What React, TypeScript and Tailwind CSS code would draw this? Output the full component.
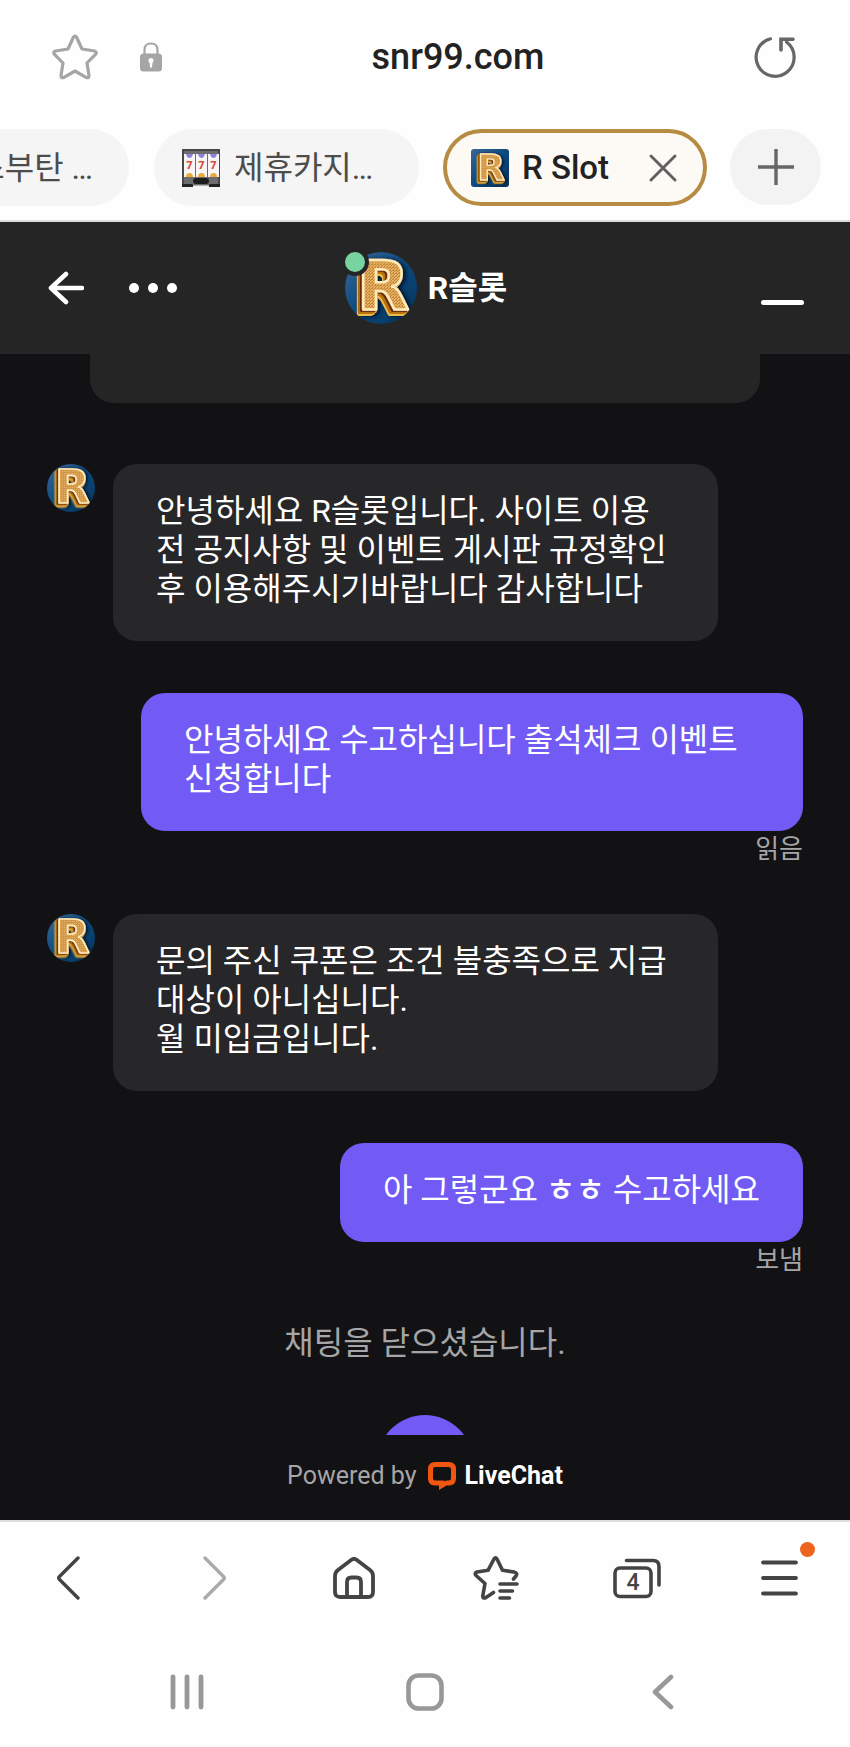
import type { ReactNode } from 'react';

function Logo({ className }: { className: string }) {
  return (
    <svg viewBox="0 0 72 72" className={className} aria-hidden="true">
      <defs>
        <linearGradient id="logo-bg" x1="0" y1="0" x2="1" y2="1">
          <stop offset="0" stopColor="#3a6796" />
          <stop offset="0.5" stopColor="#0b4a7f" />
          <stop offset="1" stopColor="#063257" />
        </linearGradient>
        <linearGradient id="logo-face" x1="0" y1="0" x2="0" y2="1">
          <stop offset="0" stopColor="#f3c274" />
          <stop offset="0.5" stopColor="#d18f35" />
          <stop offset="1" stopColor="#efb95c" />
        </linearGradient>
        <pattern id="logo-mesh" width="3" height="3" patternUnits="userSpaceOnUse">
          <rect width="3" height="3" fill="#e6b163" />
          <path d="M0 3 3 0M0 0l1.500 1.500" stroke="#bd7f31" strokeWidth="0.800" />
        </pattern>
        <filter id="logo-depth" x="-30%" y="-30%" width="160%" height="160%">
          <feDropShadow dx="0" dy="0" stdDeviation="0.400" floodColor="#7a3d0c" />
          <feDropShadow dx="-2" dy="1" stdDeviation="0" floodColor="#6a2c08" />
          <feDropShadow dx="-2" dy="2" stdDeviation="0" floodColor="#b8720f" />
          <feDropShadow dx="-1" dy="2" stdDeviation="0" floodColor="#efbd4b" />
          <feDropShadow dx="3" dy="1" stdDeviation="2" floodColor="#03192e" />
        </filter>
      </defs>
      <rect width="72" height="72" fill="url(#logo-bg)" />
      <text
        x="12"
        y="58"
        filter="url(#logo-depth)"
        fontFamily="DejaVu Sans, sans-serif"
        fontWeight="700"
        fontSize="68"
        fill="url(#logo-mesh)"
        stroke="#ffeab8"
        strokeWidth="2.600"
        strokeLinejoin="round"
      >
        R
      </text>
    </svg>
  );
}

function SlotMachine() {
  return (
    <svg viewBox="0 0 38 38" className="size-[38px] shrink-0" aria-hidden="true">
      <rect width="38" height="38" rx="1" fill="#6d6d6f" />
      <path d="M1 38V1h36v37" fill="none" stroke="#3c3c3e" strokeWidth="1.5" />
      {[2, 14, 26].map((x) => (
        <g key={x}>
          <rect x={x} y="5" width="11" height="23" fill="#f7f5f5" />
          <path d={`M${x + 2} 5h7q-1 4-3.500 4T${x + 2} 5`} fill="#8f83da" />
          <path d={`M${x + 2} 28q0-4 3.500-4t3.500 4z`} fill="#eda93c" />
          <text x={x + 5.5} y="20" textAnchor="middle" fontFamily="Roboto, sans-serif" fontSize="11" fontWeight="900" fill="#df4d3c">7</text>
        </g>
      ))}
      <rect x="11" y="29" width="16" height="6" rx="3" fill="#1d1d1e" />
      <path d="M0 35h10l2 2h14l2-2h10v3H0z" fill="#232324" />
      <path d="M11 36.500h16V38H11z" fill="#f5f5f5" />
    </svg>
  );
}

function Icon({ label, className, viewBox, children }: { label: string; className: string; viewBox: string; children: ReactNode }) {
  return (
    <button type="button" aria-label={label} className="flex shrink-0 items-center justify-center">
      <svg viewBox={viewBox} className={className} fill="none" stroke="currentColor" strokeLinecap="round" strokeLinejoin="round">
        {children}
      </svg>
    </button>
  );
}

function AgentMessage({ children }: { children: ReactNode }) {
  return (
    <div className="mr-[132px] ml-[47px] flex items-start gap-[18px]">
      <Logo className="size-12 shrink-0 rounded-full" />
      <p className="flex-1 rounded-3xl bg-[#272628] px-[43px] pt-7 pb-8 text-[32px] leading-[39px] break-keep">{children}</p>
    </div>
  );
}

function VisitorMessage({ status, children }: { status: string; children: ReactNode }) {
  return (
    <div className="mr-[47px] ml-[141px] flex flex-col items-end">
      <p className="rounded-3xl bg-[#715bf4] px-[43px] pt-7 pb-8 text-[32px] leading-[39px] break-keep">{children}</p>
      <span className="text-[26px] leading-9 text-[#a6a5a7]">{status}</span>
    </div>
  );
}

export default function App() {
  return (
    <div className="flex min-h-screen flex-col bg-[#fefefe] font-[Roboto,'Noto_Sans_CJK_KR',sans-serif]">
      <header className="border-b-2 border-[#dcdcde]">
        <div className="flex h-[113px] items-center pr-[54px] pl-[52px]">
          <Icon label="북마크 추가" className="size-[46px] text-[#a5a5a5]" viewBox="0 0 46 46">
            <path strokeWidth="3.200" d="M21.300 3.500Q23 .9 24.700 3.500L30 15l12.500 2q3 1 1 3.400L35 29l2 12.500q0 3.200-3 1.800L23 37l-11 6.300q-3 1.400-3-1.800L11 29 2.500 20.400q-2-2.400 1-3.400L16 15z" />
          </Icon>
          <svg viewBox="0 0 22 30" className="ml-[42px] h-[30px] w-[22px] text-[#a5a5a5]" aria-hidden="true">
            <path d="M4.500 13V8q0-6.500 6.500-6.500T17.500 8v5" fill="none" stroke="currentColor" strokeWidth="2.200" />
            <rect y="11.500" width="22" height="18" rx="3.500" fill="currentColor" />
            <path d="M11 16a2.600 2.600 0 0 1 1.400 4.800l-.4 4.700h-2l-.4-4.700A2.600 2.600 0 0 1 11 16z" fill="#fff" />
          </svg>
          <div className="flex-1 text-center text-[36px] leading-10 font-medium text-[#222]">snr99.com</div>
          <Icon label="새로고침" className="size-[42px] text-[#666]" viewBox="0 0 42 42">
            <path strokeWidth="3.200" d="M16.500 2.800A19 19 0 1 0 32.500 6" />
            <path strokeWidth="3.600" strokeLinejoin="miter" d="M39 3.200H27V14" />
          </Icon>
        </div>
        <nav aria-label="탭" className="flex justify-end overflow-hidden pt-4 pr-[29px] pb-[14px] text-[32px] leading-10 text-[#4c4c4c]">
          <button type="button" className="mr-[25px] flex h-[77px] w-[265px] shrink-0 items-center justify-end rounded-full bg-[#f5f5f5] pr-9 whitespace-nowrap">스부탄 …</button>
          <button type="button" className="mr-6 flex h-[77px] w-[265px] shrink-0 items-center gap-[14px] rounded-full bg-[#f5f5f5] pl-7 whitespace-nowrap">
            <SlotMachine />
            제휴카지…
          </button>
          <div className="mr-[23px] flex h-[77px] w-[264px] shrink-0 items-center rounded-full border-4 border-[#b68b42] bg-[#fdfaf6] pr-[26px] pl-6 text-[33px] font-medium text-[#222]">
            <button type="button" className="flex flex-1 items-center gap-[13px]">
              <Logo className="size-[38px] rounded-[3px]" />
              R Slot
            </button>
            <Icon label="탭 닫기" className="size-[28px] text-[#606060]" viewBox="0 0 28 28">
              <path strokeWidth="2.900" d="m2 2 24 24M26 2 2 26" />
            </Icon>
          </div>
          <button type="button" aria-label="새 탭" className="flex h-[76px] w-[91px] shrink-0 items-center justify-center rounded-full bg-[#f4f3f4]">
            <svg viewBox="0 0 38 38" className="size-[38px] text-[#666]" fill="none" stroke="currentColor" strokeWidth="3.400" aria-hidden="true">
              <path d="M1 19h36M19 1v36" />
            </svg>
          </button>
        </nav>
      </header>

      <main className="flex flex-col bg-[#121113] text-white">
        <div className="flex h-[132px] items-center bg-[#252526] px-[46px]">
          <div className="flex flex-1 items-center gap-[45px] pl-0.5">
            <Icon label="뒤로" className="h-[34px] w-9" viewBox="0 0 36 34">
              <path strokeWidth="4.600" d="M18 3 3 17l15 14M3 17h31" />
            </Icon>
            <Icon label="더보기" className="h-3 w-12" viewBox="0 0 48 12">
              <g fill="currentColor" stroke="none"><circle cx="5" cy="6" r="5" /><circle cx="24" cy="6" r="5" /><circle cx="43" cy="6" r="5" /></g>
            </Icon>
          </div>
          <div className="flex items-center gap-[11px]">
            <div className="relative">
              <Logo className="size-[72px] rounded-full" />
              <span className="absolute -top-1 -left-1 size-7 rounded-full border-4 border-[#252526] bg-[#77d4a1]" />
            </div>
            <h1 className="text-[32px] leading-10 font-bold">R슬롯</h1>
          </div>
          <div className="flex flex-1 justify-end">
            <button type="button" aria-label="최소화" className="flex h-[34px] w-[43px] items-end">
              <span className="h-[5px] w-full rounded-full bg-white" />
            </button>
          </div>
        </div>

        <div className="flex h-[1081px] flex-col overflow-hidden">
          <div className="mx-[90px] mb-[61px] h-[49px] shrink-0 rounded-b-3xl bg-[#252526]" />
          <AgentMessage>안녕하세요 R슬롯입니다. 사이트 이용 전 공지사항 및 이벤트 게시판 규정확인 후 이용해주시기바랍니다 감사합니다</AgentMessage>
          <div className="h-[52px] shrink-0" />
          <VisitorMessage status="읽음">안녕하세요 수고하십니다 출석체크 이벤트 신청합니다</VisitorMessage>
          <div className="h-[47px] shrink-0" />
          <AgentMessage>
            문의 주신 쿠폰은 조건 불충족으로 지급 대상이 아니십니다.
            <br />
            월 미입금입니다.
          </AgentMessage>
          <div className="h-[52px] shrink-0" />
          <VisitorMessage status="보냄">아 그렇군요 <span className="font-medium">ㅎㅎ</span> 수고하세요</VisitorMessage>
          <p className="mt-[45px] text-center text-[32px] leading-10 text-[#a6a5a7]">채팅을 닫으셨습니다.</p>
          <button type="button" aria-label="채팅 다시 시작" className="mx-auto mt-[52px] size-24 shrink-0 rounded-full bg-[#715bf4]" />
        </div>

        <footer className="flex h-[85px] items-center justify-center pb-1 text-[25px]">
          <span className="text-[#a6a5a7]">Powered by</span>
          <a href="#livechat" className="ml-[11px] flex items-center gap-[9px] font-bold">
            <svg viewBox="0 0 28 28" className="size-7" fill="none" aria-hidden="true">
              <path
                fill="#f0560f"
                fillRule="evenodd"
                d="M7 0h14q6.500 0 7 6.500v10.500q-.5 6-6.500 6.500h-3L11 28v-4.500H6.500Q.5 23 0 17V6.500Q.5 0 7 0zM7.500 5Q5 5 5 7.500v8.500q0 2.500 2.500 2.500H16v1l2-1h2.500Q23 18.500 23 16V7.500Q23 5 20.500 5z"
              />
            </svg>
            LiveChat
          </a>
        </footer>
      </main>

      <footer className="border-t-2 border-[#dddddf]">
        <nav aria-label="브라우저 메뉴" className="grid h-28 grid-cols-6 items-center text-[#444446]">
          <Icon label="이전 페이지" className="h-11 w-[30px]" viewBox="0 0 30 44"><path strokeWidth="3.400" d="M22 2 3.500 20.500q-1.500 1.500 0 3L22 42" /></Icon>
          <Icon label="다음 페이지" className="h-11 w-[30px] text-[#aaa]" viewBox="0 0 30 44"><path strokeWidth="3.400" d="m8 2 18.500 18.500q1.500 1.500 0 3L8 42" /></Icon>
          <Icon label="홈" className="size-[42px]" viewBox="0 0 42 42">
            <path strokeWidth="3.800" d="M18.800 2.600Q21 1.200 23.200 2.600L37 13q3 2.300 3 6v16q0 5-5 5H7q-5 0-5-5V19q0-3.700 3-6zM14 40V25q0-4.500 4.500-4.500h5Q28 20.500 28 25v15" />
          </Icon>
          <Icon label="북마크" className="h-11 w-[46px]" viewBox="0 0 46 44">
            <path strokeWidth="3.600" d="M20.500 36.500 13 41.500q-3.500 1.500-3.200-1.700L12 27.500 3 19.500q-2-2.500 1-3.500l11-1.700 6-11.300q1.500-2.400 3 0l5.500 11.300L41 16q4 1.200 2 4l-2.500 3" />
            <path strokeWidth="3.600" d="M27 28h17M27 35h12.500M27 42h9.500" />
          </Icon>
          <Icon label="탭 4개" className="h-[42px] w-12" viewBox="0 0 48 42">
            <rect x="2" y="11" width="36" height="28.500" rx="5" strokeWidth="3.600" />
            <path strokeWidth="3.600" d="M13.500 3.500H40q6 0 6 6V28" />
            <text x="20" y="33" textAnchor="middle" fill="currentColor" stroke="none" fontFamily="Roboto, sans-serif" fontSize="23" fontWeight="500">4</text>
          </Icon>
          <div className="relative flex items-center justify-center">
            <Icon label="메뉴" className="h-9 w-[38px]" viewBox="0 0 38 36"><path strokeWidth="3.800" d="M3 2.500h33M3 18h33M3 33.500h33" /></Icon>
            <span className="absolute -top-[18px] right-[35px] size-[15px] rounded-full bg-[#ed621c]" />
          </div>
        </nav>
        <nav aria-label="시스템 탐색" className="grid h-[114px] grid-cols-3 items-center px-[68px] pt-0.5 text-[#98979a]">
          <Icon label="최근 앱" className="h-9 w-[34px]" viewBox="0 0 34 36"><path strokeWidth="4.800" d="M3 3v30M17 3v30M31 3v30" /></Icon>
          <Icon label="홈 화면" className="size-[38px]" viewBox="0 0 38 38"><rect x="2.500" y="2.500" width="33" height="33" rx="10" strokeWidth="4.600" /></Icon>
          <Icon label="뒤로 가기" className="h-9 w-[22px]" viewBox="0 0 22 36"><path strokeWidth="4.600" d="M19 3 3 18l16 15" /></Icon>
        </nav>
      </footer>
    </div>
  );
}
